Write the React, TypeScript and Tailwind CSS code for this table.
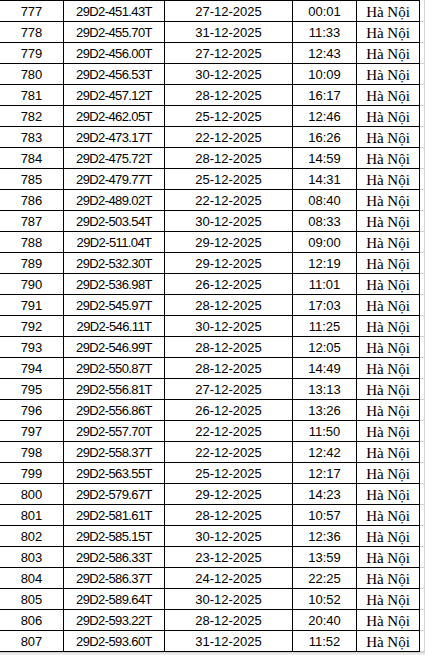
import React from "react";

const rows: [string, string, string, string][] = [
  ["777", "29D2-451.43T", "27-12-2025", "00:01"],
  ["778", "29D2-455.70T", "31-12-2025", "11:33"],
  ["779", "29D2-456.00T", "27-12-2025", "12:43"],
  ["780", "29D2-456.53T", "30-12-2025", "10:09"],
  ["781", "29D2-457.12T", "28-12-2025", "16:17"],
  ["782", "29D2-462.05T", "25-12-2025", "12:46"],
  ["783", "29D2-473.17T", "22-12-2025", "16:26"],
  ["784", "29D2-475.72T", "28-12-2025", "14:59"],
  ["785", "29D2-479.77T", "25-12-2025", "14:31"],
  ["786", "29D2-489.02T", "22-12-2025", "08:40"],
  ["787", "29D2-503.54T", "30-12-2025", "08:33"],
  ["788", "29D2-511.04T", "29-12-2025", "09:00"],
  ["789", "29D2-532.30T", "29-12-2025", "12:19"],
  ["790", "29D2-536.98T", "26-12-2025", "11:01"],
  ["791", "29D2-545.97T", "28-12-2025", "17:03"],
  ["792", "29D2-546.11T", "30-12-2025", "11:25"],
  ["793", "29D2-546.99T", "28-12-2025", "12:05"],
  ["794", "29D2-550.87T", "28-12-2025", "14:49"],
  ["795", "29D2-556.81T", "27-12-2025", "13:13"],
  ["796", "29D2-556.86T", "26-12-2025", "13:26"],
  ["797", "29D2-557.70T", "22-12-2025", "11:50"],
  ["798", "29D2-558.37T", "22-12-2025", "12:42"],
  ["799", "29D2-563.55T", "25-12-2025", "12:17"],
  ["800", "29D2-579.67T", "29-12-2025", "14:23"],
  ["801", "29D2-581.61T", "28-12-2025", "10:57"],
  ["802", "29D2-585.15T", "30-12-2025", "12:36"],
  ["803", "29D2-586.33T", "23-12-2025", "13:59"],
  ["804", "29D2-586.37T", "24-12-2025", "22:25"],
  ["805", "29D2-589.64T", "30-12-2025", "10:52"],
  ["806", "29D2-593.22T", "28-12-2025", "20:40"],
  ["807", "29D2-593.60T", "31-12-2025", "11:52"],
];

const sans = "font-['Liberation_Sans',Arial,sans-serif] text-[13px] leading-[14px] text-black";
const serif = "font-['Liberation_Serif','Times_New_Roman',serif] text-[15px] leading-[14px] text-black";

export default function App() {
  return (
    <div className="w-[425px] h-[655px] overflow-hidden bg-white">
      <div className="flex flex-col">
        <div className="flex h-px">
          <div className="w-[420px] bg-black" />
          <div className="w-[4px]" />
          <div className="w-px bg-[#d4d4d4]" />
        </div>
        {rows.map((r) => (
          <div key={r[0]} className="flex h-[21px]">
            <div className={`w-[64px] border-r border-b border-black flex items-end justify-center pb-[2px] ${sans}`}>
              {r[0]}
            </div>
            <div className={`w-[101px] border-r border-b border-black flex items-end justify-center pb-[2px] tracking-[-0.6px] ${sans}`}>
              {r[1]}
            </div>
            <div className={`w-[128px] border-r border-b border-black flex items-end justify-center pb-[2px] ${sans}`}>
              {r[2]}
            </div>
            <div className={`w-[64px] border-r border-b border-black flex items-end justify-center pb-[2px] ${sans}`}>
              {r[3]}
            </div>
            <div className={`w-[63px] border-r border-b border-black flex items-end justify-center pb-[2px] ${serif}`}>
              Hà Nội
            </div>
            <div className="w-[5px] border-r border-b border-[#d4d4d4]" />
          </div>
        ))}
        <div className="h-[3px] bg-[#ececec] border-t border-[#d0d0d0]" />
      </div>
    </div>
  );
}
